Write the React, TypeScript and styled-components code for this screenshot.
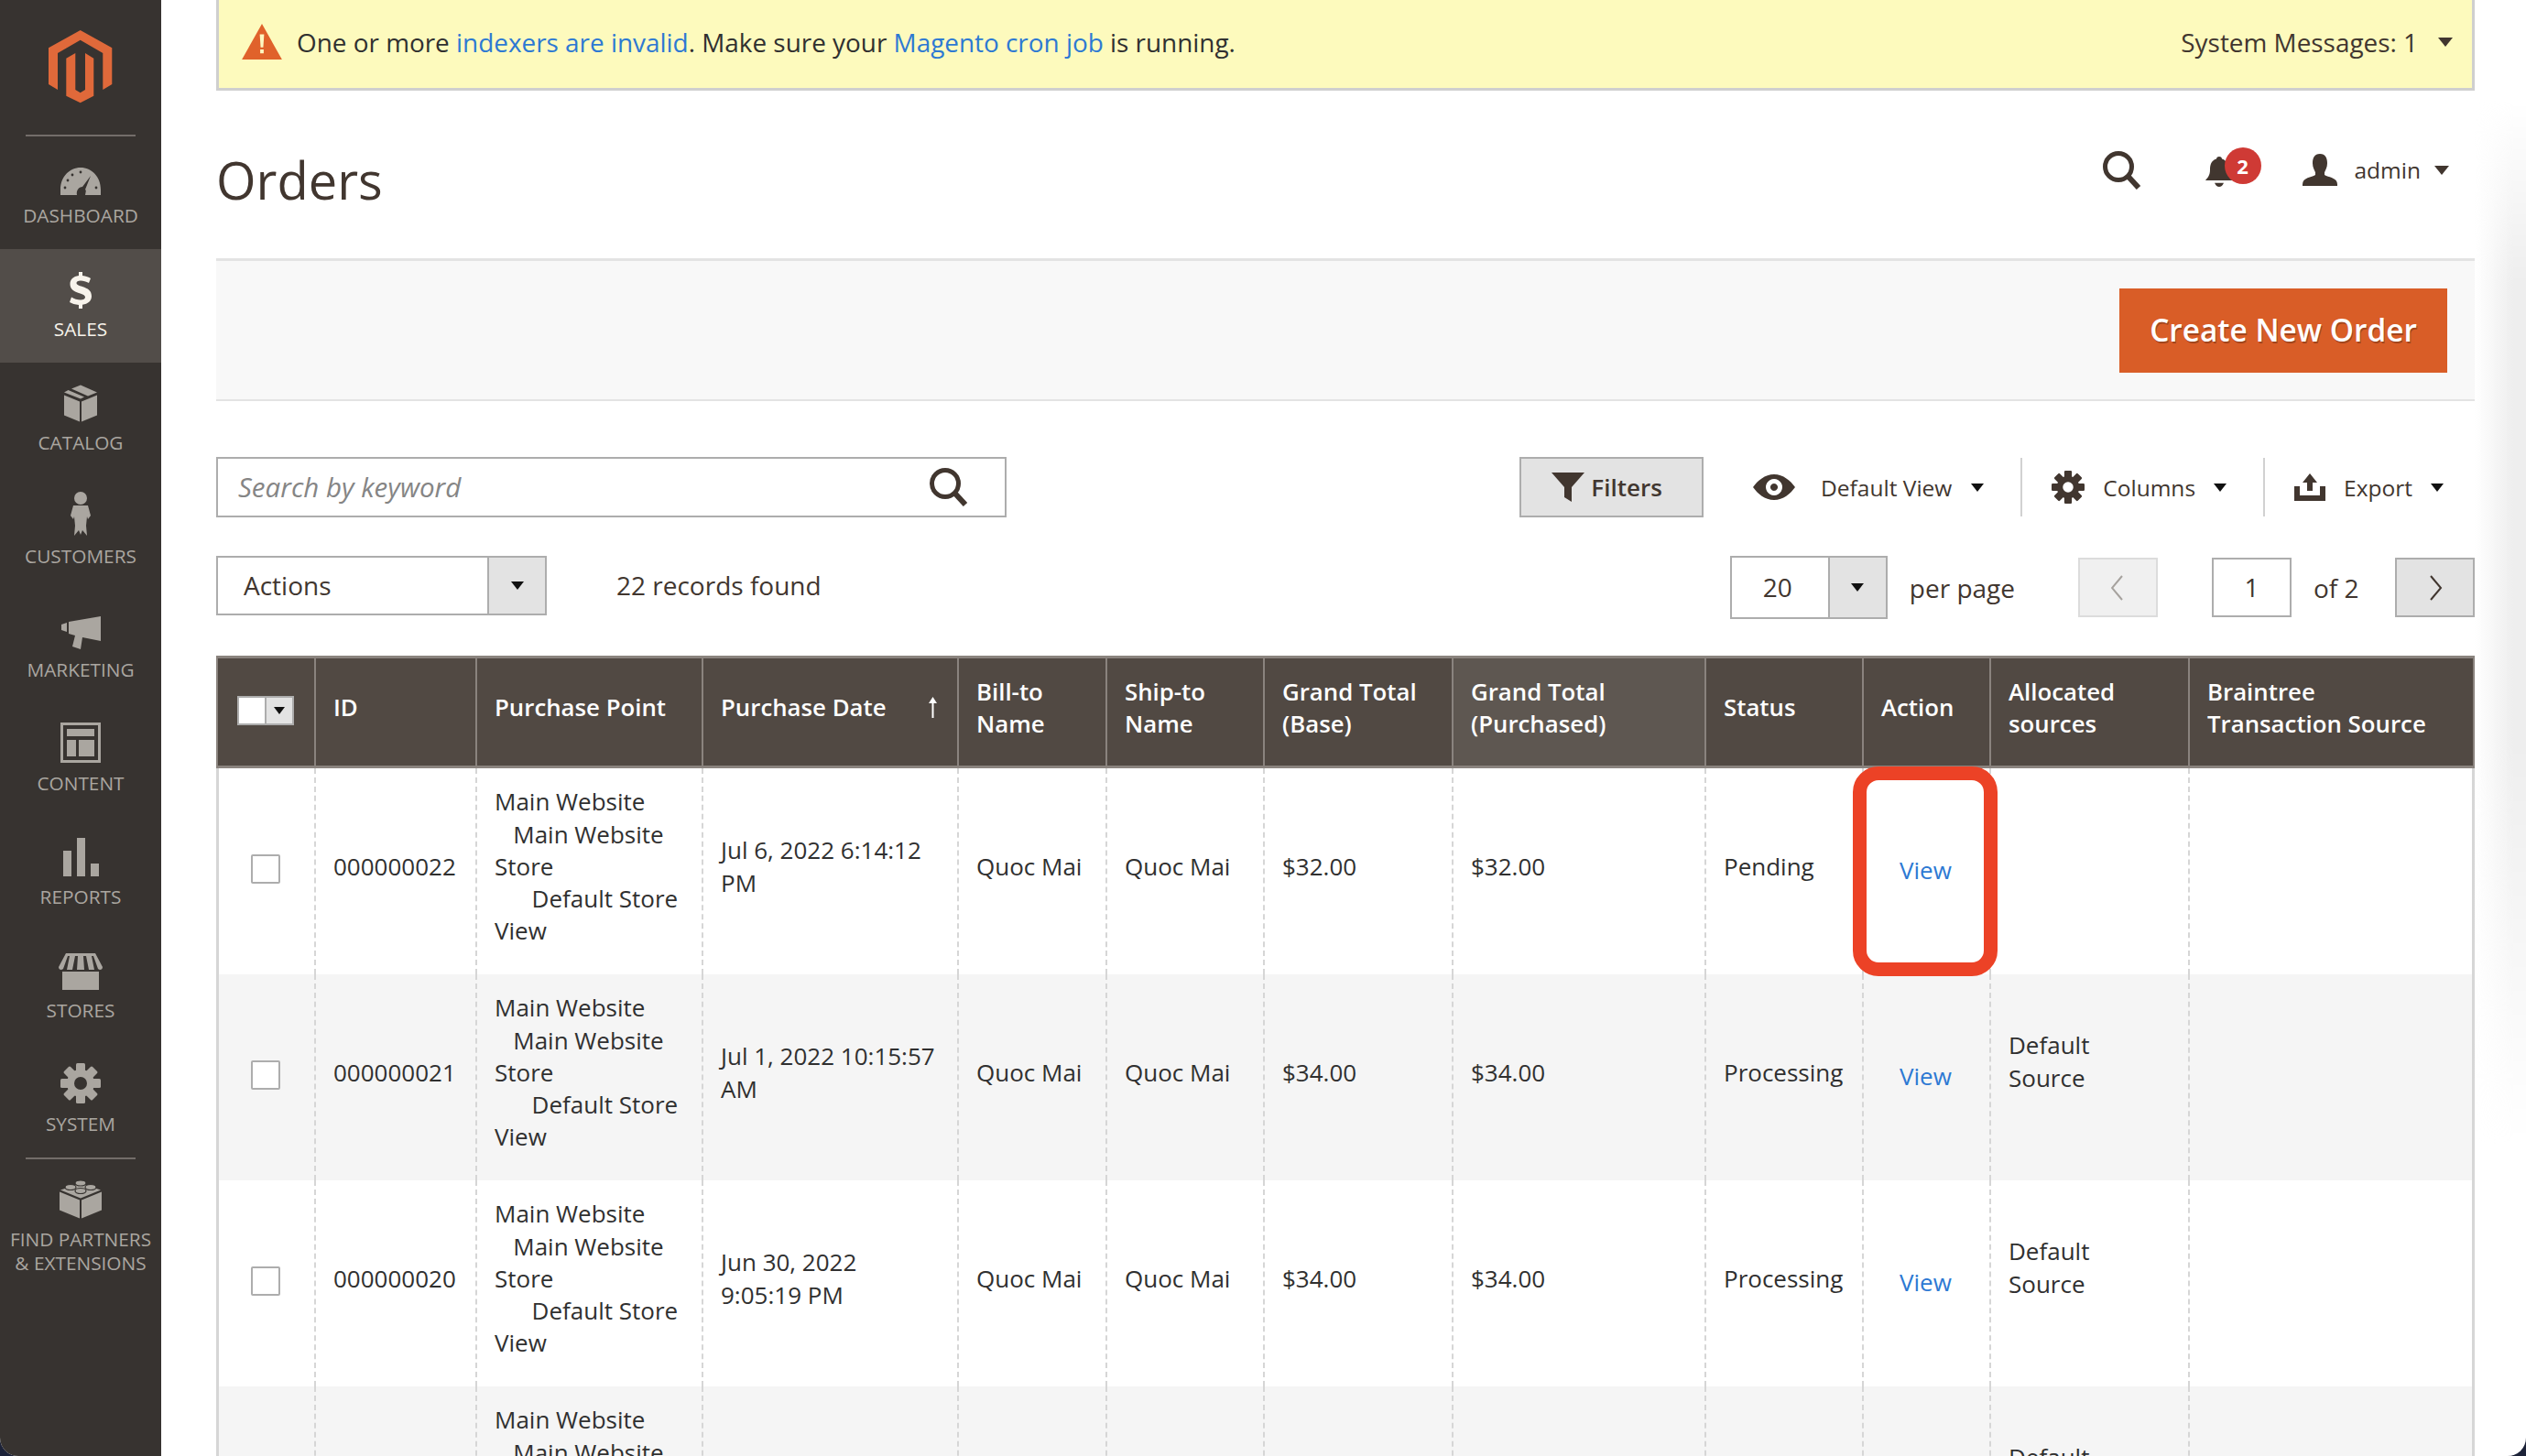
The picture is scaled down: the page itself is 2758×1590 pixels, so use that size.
import React from "react";
import styled, { createGlobalStyle } from "styled-components";

const GlobalStyle = createGlobalStyle`
  html, body {
    margin: 0;
    padding: 0;
    background: #1c2238;
  }
  body {
    font-family: "Open Sans", "Liberation Sans", sans-serif;
    color: #303030;
  }
  * {
    box-sizing: border-box;
  }
`;

type Row = {
  id: string;
  date: string;
  total: string;
  status: string;
  source?: string;
};

const rows: Row[] = [
  { id: "000000022", date: "Jul 6, 2022 6:14:12 PM", total: "$32.00", status: "Pending" },
  { id: "000000021", date: "Jul 1, 2022 10:15:57 AM", total: "$34.00", status: "Processing", source: "Default Source" },
  { id: "000000020", date: "Jun 30, 2022 9:05:19 PM", total: "$34.00", status: "Processing", source: "Default Source" },
  { id: "000000019", date: "Jun 30, 2022 9:01:44 PM", total: "$34.00", status: "Processing", source: "Default Source" },
];

const columnWidths = [107, 176, 247, 279, 162, 172, 206, 276, 172, 139, 217, 313];

const navItems = [
  { label: "Dashboard", icon: <GaugeIcon /> },
  { label: "Sales", icon: <DollarIcon />, active: true },
  { label: "Catalog", icon: <BoxIcon /> },
  { label: "Customers", icon: <PersonIcon /> },
  { label: "Marketing", icon: <MegaphoneIcon /> },
  { label: "Content", icon: <ContentIcon /> },
  { label: "Reports", icon: <BarsIcon /> },
  { label: "Stores", icon: <StoreIcon /> },
  { label: "System", icon: <GearIcon /> },
];

function Logo() {
  return (
    <svg width="70" height="80" viewBox="0 0 70 80" fill="#e0693a">
      <path d="M34.7 0 69.3 19.3V59L59.3 65V25L34.7 10.7 10 25V65L0 59V19.3Z" />
      <path d="M19.3 30.7 29.3 25V65L34.7 68.3 40 65V25L49.3 30.7V71.7L34.7 79.3 19.3 71.7Z" />
    </svg>
  );
}

function GaugeIcon() {
  return (
    <svg width="44" height="30" viewBox="0 0 44 30" fill="#aaa6a0">
      <path d="M0 30V24C0 10 10 0 22 0S44 10 44 24V30H27C28 25 28 25 27 24L33 9 24 21C20 21 17 25 18 30Z" />
      <g fill="#373330">
        <circle cx="8" cy="14" r="1.4" />
        <circle cx="13" cy="8" r="1.4" />
        <circle cx="22" cy="5" r="1.4" />
        <circle cx="5" cy="22" r="1.4" />
        <circle cx="39" cy="22" r="1.4" />
      </g>
    </svg>
  );
}

function DollarIcon() {
  return (
    <svg width="24" height="40" viewBox="0 0 24 40" fill="#f7f3eb">
      <path d="M10 0H14V4C18 4.5 21 5.5 23 7L21 12C18 10.5 15 9.5 12 9.5 9 9.5 7.5 10.5 7.5 12 7.5 14 10 14.8 14 16 20 18 24 20.5 24 26.5 24 31.5 20 35 14 35.8V40H10V36C6 35.7 2.5 34.5 0 33L2 27.5C5 29.2 8.5 30.5 12 30.5 15 30.5 17 29.5 17 27.5 17 25.5 14.5 24.5 10 23 4.5 21.2 0.5 18.8 0.5 13 0.5 8.2 4 4.8 10 4Z" />
    </svg>
  );
}

function BoxIcon() {
  return (
    <svg width="36" height="41" viewBox="0 0 36 40" fill="#aaa6a0">
      <path d="M18 0 36 8 26 12 8 4Z" />
      <path d="M4.5 5.5 22 13 18 15 0 8Z" />
      <path d="M0 11 17 18V40L0 33Z" />
      <path d="M36 11V33L19 40V18Z" />
    </svg>
  );
}

function PersonIcon() {
  return (
    <svg width="22" height="48" viewBox="0 0 22 48" fill="#aaa6a0">
      <circle cx="11" cy="7" r="7" />
      <path d="M3 15H19L22 26 19 30 18 27 17 37 18 48 13 42 11 47 9 42 4 48 5 37 4 27 3 30 0 26Z" />
    </svg>
  );
}

function MegaphoneIcon() {
  return (
    <svg width="43" height="36" viewBox="0 0 43 36" fill="#aaa6a0">
      <path d="M0 9 6 7V17L0 15Z" />
      <path d="M8 6 43 0V27L23 23 21 36 12 33 15 21 8 19Z" />
    </svg>
  );
}

function ContentIcon() {
  return (
    <svg width="44" height="44" viewBox="0 0 44 44" fill="#aaa6a0">
      <path fillRule="evenodd" d="M0 0H44V44H0ZM3 3V41H41V3Z" />
      <rect x="7" y="7" width="30" height="8" />
      <rect x="7" y="19" width="10" height="18" />
      <rect x="20" y="19" width="17" height="18" />
    </svg>
  );
}

function BarsIcon() {
  return (
    <svg width="39" height="42" viewBox="0 0 39 42" fill="#aaa6a0">
      <rect x="0" y="14" width="9" height="28" />
      <rect x="15" y="0" width="9" height="42" />
      <rect x="30" y="28" width="9" height="14" />
    </svg>
  );
}

function StoreIcon() {
  return (
    <svg width="48" height="40" viewBox="0 0 48 40" fill="#aaa6a0">
      <path d="M8 0H40L48 15C48 18 45 19 43 17L38 3H36L39 18H33L30 3H27L28 18H20L21 3H18L15 18H9L12 3H10L5 17C3 19 0 18 0 15Z" />
      <path d="M4 20H44V40H4Z" />
    </svg>
  );
}

function GearPaths({ hole }: { hole: string }) {
  const teeth = [0, 45, 90, 135, 180, 225, 270, 315];
  return (
    <>
      {teeth.map((a) => (
        <rect key={a} x="17" y="0" width="10" height="12" rx="1.5" transform={`rotate(${a} 22 22)`} />
      ))}
      <circle cx="22" cy="22" r="15" />
      <circle cx="22" cy="22" r="7" fill={hole} />
    </>
  );
}

function GearIcon() {
  return (
    <svg width="44" height="44" viewBox="0 0 44 44" fill="#aaa6a0">
      <GearPaths hole="#373330" />
    </svg>
  );
}

function BlockIcon() {
  return (
    <svg width="46" height="43" viewBox="0 0 46 42" fill="#aaa6a0">
      <path d="M0 13 22 22V42L0 33Z" />
      <path d="M46 13 24 22V42L46 33Z" />
      <path d="M23 4 45 11 23 20 1 11Z" />
      <g stroke="#373330" strokeWidth="1.2">
        <ellipse cx="23" cy="3.5" rx="6" ry="3" />
        <ellipse cx="12" cy="8" rx="6" ry="3" />
        <ellipse cx="34" cy="8" rx="6" ry="3" />
        <ellipse cx="23" cy="12" rx="6" ry="3" />
      </g>
    </svg>
  );
}

function SearchIcon({ size }: { size: number }) {
  return (
    <svg width={size} height={size} viewBox="0 0 42 42" fill="none" stroke="#41362f">
      <circle cx="17" cy="17" r="14.5" strokeWidth="5" />
      <path d="M27 27 39 40" strokeWidth="6" />
    </svg>
  );
}

function BellIcon() {
  return (
    <svg width="30" height="33" viewBox="0 0 30 38" preserveAspectRatio="none" fill="#41362f">
      <path d="M15 0C17 0 18 1.5 18 3 24 5 25 11 25 17 25 24 28 27 30 30H0C2 27 5 24 5 17 5 11 6 5 12 3 12 1.5 13 0 15 0Z" />
      <path d="M10 33H20C19 36 17 38 15 38S11 36 10 33Z" />
    </svg>
  );
}

function UserIcon() {
  return (
    <svg width="38" height="35" viewBox="0 0 38 38" preserveAspectRatio="none" fill="#41362f">
      <path d="M19 0C25 0 27 5 27 11 27 16 25 19 24 22V25C28 28 38 28 38 36V38H0V36C0 28 10 28 14 25V22C13 19 11 16 11 11 11 5 13 0 19 0Z" />
    </svg>
  );
}

function WarningIcon() {
  return (
    <svg width="44" height="39" viewBox="0 0 46 41">
      <path fill="#e0622b" d="M23 0 46 41H0Z" />
      <path fill="#fdf8c2" d="M20.5 12H25.5L24.5 27H21.5ZM21 29.5H25V34H21Z" />
    </svg>
  );
}

function FunnelIcon() {
  return (
    <svg width="36" height="32" viewBox="0 0 36 32" fill="#41362f">
      <path d="M0 0H36L22 16V32L14 27V16Z" />
    </svg>
  );
}

function EyeIcon() {
  return (
    <svg width="46" height="28" viewBox="0 0 46 28" fill="#41362f">
      <path
        fillRule="evenodd"
        d="M23 0C33 0 41 7 46 14 41 21 33 28 23 28S5 21 0 14C5 7 13 0 23 0ZM23 5A9 9 0 1 0 23.01 5ZM23 10A4 4 0 1 1 22.99 10Z"
      />
    </svg>
  );
}

function ExportIcon() {
  return (
    <svg width="34" height="30" viewBox="0 0 34 30" fill="#41362f">
      <path d="M17 0 25 10H20V19H14V10H9Z" />
      <path d="M0 14H6V24H28V14H34V30H0Z" />
    </svg>
  );
}

function ColumnsGear() {
  return (
    <svg width="36" height="36" viewBox="0 0 44 44" fill="#41362f">
      <GearPaths hole="#fff" />
    </svg>
  );
}

function ChevronIcon({ left, color }: { left?: boolean; color: string }) {
  return (
    <svg width="16" height="28" viewBox="0 0 16 28" fill="none" stroke={color} strokeWidth="2">
      <path d={left ? "M12 1 1 14 12 27" : "M3 1 14 14 3 27"} />
    </svg>
  );
}

function SortUpIcon() {
  return (
    <svg width="11" height="23" viewBox="0 0 11 23" fill="#fff">
      <path d="M5.5 0 10 7H6.5V23H4.5V7H1Z" />
    </svg>
  );
}

export default function App() {
  return (
    <Page>
      <GlobalStyle />
      <Sidebar>
        <LogoBox>
          <Logo />
        </LogoBox>
        {navItems.map((item) => (
          <NavItem key={item.label} $active={item.active}>
            <NavIcon>{item.icon}</NavIcon>
            <NavLabel>{item.label}</NavLabel>
          </NavItem>
        ))}
        <NavDivider />
        <PartnersItem>
          <NavIcon>
            <BlockIcon />
          </NavIcon>
          <NavLabel>
            Find Partners
            <br />& Extensions
          </NavLabel>
        </PartnersItem>
      </Sidebar>

      <Main>
        <Banner>
          <BannerMessage>
            <WarningIcon />
            <span>
              One or more <BlueLink>indexers are invalid</BlueLink>. Make sure your{" "}
              <BlueLink>Magento cron job</BlueLink> is running.
            </span>
          </BannerMessage>
          <BannerRight>
            System Messages: 1 <Caret $size={8} $gap={22} />
          </BannerRight>
        </Banner>

        <TitleRow>
          <Title>Orders</Title>
          <HeaderActions>
            <SearchIcon size={42} />
            <BellWrap>
              <BellIcon />
              <Badge>2</Badge>
            </BellWrap>
            <AdminBox>
              <UserIcon />
              <AdminName>admin</AdminName>
              <Caret $size={8} $gap={15} />
            </AdminBox>
          </HeaderActions>
        </TitleRow>

        <ActionBar>
          <PrimaryButton>Create New Order</PrimaryButton>
        </ActionBar>

        <ToolRow>
          <SearchBox>
            <SearchPlaceholder>Search by keyword</SearchPlaceholder>
            <SearchIcon size={42} />
          </SearchBox>
          <ToolRight>
            <FilterButton>
              <FunnelIcon />
              Filters
            </FilterButton>
            <ToolItem $left={54}>
              <EyeIcon />
              <ToolText $gap={28}>Default View</ToolText>
              <Caret $size={7} $gap={21} $dark />
            </ToolItem>
            <ToolDivider />
            <ToolItem $left={32}>
              <ColumnsGear />
              <ToolText $gap={20}>Columns</ToolText>
              <Caret $size={7} $gap={20} $dark />
            </ToolItem>
            <ToolDivider />
            <ToolItem $left={32} $last>
              <ExportIcon />
              <ToolText $gap={20}>Export</ToolText>
              <Caret $size={7} $gap={20} $dark />
            </ToolItem>
          </ToolRight>
        </ToolRow>

        <PagerRow>
          <ActionsSelect>
            <SelectValue>Actions</SelectValue>
            <SelectArrow>
              <Caret $size={7} $dark />
            </SelectArrow>
          </ActionsSelect>
          <Records>22 records found</Records>
          <PagerRight>
            <PerPageSelect>
              <PerPageValue>20</PerPageValue>
              <SelectArrow>
                <Caret $size={7} $dark />
              </SelectArrow>
            </PerPageSelect>
            <PerPageText>per page</PerPageText>
            <PageButton $disabled>
              <ChevronIcon left color="#a6a29e" />
            </PageButton>
            <PageInput>1</PageInput>
            <OfText>of 2</OfText>
            <PageButton>
              <ChevronIcon color="#41362f" />
            </PageButton>
          </PagerRight>
        </PagerRow>

        <Table>
          <colgroup>
            {columnWidths.map((w, i) => (
              <col key={i} width={w} />
            ))}
          </colgroup>
          <thead>
            <tr>
              <HeadCell $center>
                <MassSelect>
                  <MassBox />
                  <MassArrow>
                    <Caret $size={6} $dark />
                  </MassArrow>
                </MassSelect>
              </HeadCell>
              <HeadCell>ID</HeadCell>
              <HeadCell>Purchase Point</HeadCell>
              <HeadCell>
                <SortHead>
                  Purchase Date <SortUpIcon />
                </SortHead>
              </HeadCell>
              <HeadCell>Bill-to Name</HeadCell>
              <HeadCell>Ship-to Name</HeadCell>
              <HeadCell>
                Grand Total
                <br />
                (Base)
              </HeadCell>
              <HeadCell $sorted>
                Grand Total
                <br />
                (Purchased)
              </HeadCell>
              <HeadCell>Status</HeadCell>
              <HeadCell>Action</HeadCell>
              <HeadCell>
                Allocated
                <br />
                sources
              </HeadCell>
              <HeadCell>
                Braintree
                <br />
                Transaction Source
              </HeadCell>
            </tr>
          </thead>
          <tbody>
            {rows.map((row, i) => (
              <BodyRow key={row.id} $odd={i % 2 === 1}>
                <BodyCell $center>
                  <Check />
                </BodyCell>
                <BodyCell>{row.id}</BodyCell>
                <BodyCell>
                  Main Website
                  <br />
                  {"\u00A0\u00A0\u00A0"}Main Website Store
                  <br />
                  {"\u00A0\u00A0\u00A0\u00A0\u00A0\u00A0"}Default Store View
                </BodyCell>
                <BodyCell>{row.date}</BodyCell>
                <BodyCell>Quoc Mai</BodyCell>
                <BodyCell>Quoc Mai</BodyCell>
                <BodyCell>{row.total}</BodyCell>
                <BodyCell>{row.total}</BodyCell>
                <BodyCell>{row.status}</BodyCell>
                <ActionCell>
                  <ViewLink>View</ViewLink>
                  {i === 0 && <Marker />}
                </ActionCell>
                <BodyCell>
                  <SourceText>{row.source}</SourceText>
                </BodyCell>
                <BodyCell />
              </BodyRow>
            ))}
          </tbody>
        </Table>
      </Main>
      <EdgeShade />
    </Page>
  );
}

const Page = styled.div`
  position: relative;
  display: flex;
  width: 2758px;
  height: 1590px;
  overflow: hidden;
  background: #fff;
  border-radius: 0 0 20px 20px;
`;

const Sidebar = styled.nav`
  flex: 0 0 176px;
  background: #373330;
`;

const LogoBox = styled.div`
  display: flex;
  justify-content: center;
  height: 149px;
  padding-top: 33px;
  margin: 0 28px -1px;
  border-bottom: 2px solid #736d69;
`;

const NavItem = styled.div<{ $active?: boolean }>`
  display: flex;
  flex-direction: column;
  align-items: center;
  justify-content: flex-end;
  height: 124px;
  padding-bottom: 24px;
  background: ${(p) => (p.$active ? "#524d49" : "transparent")};
  color: ${(p) => (p.$active ? "#f7f3eb" : "#aaa6a0")};
`;

const PartnersItem = styled(NavItem)`
  height: auto;
  padding: 15px 0 0;
  justify-content: flex-start;
`;

const NavIcon = styled.div`
  display: flex;
  align-items: flex-end;
  justify-content: center;
  height: 50px;
`;

const NavLabel = styled.div`
  margin-top: 9px;
  font-size: 20.8px;
  line-height: 26px;
  text-align: center;
  text-transform: uppercase;
  white-space: nowrap;
`;

const NavDivider = styled.div`
  height: 2px;
  margin: 0 28px;
  background: #736d69;
`;

const Main = styled.main`
  flex: 0 0 2466px;
  min-width: 0;
  margin-left: 60px;
`;

const Banner = styled.div`
  display: flex;
  align-items: center;
  justify-content: space-between;
  height: 99px;
  padding: 0 21px 5px 25px;
  background: #fdfabd;
  border: 3px solid #cfcfcf;
  border-top: 0;
  font-size: 27.9px;
`;

const BannerMessage = styled.div`
  display: flex;
  align-items: center;
  gap: 16px;
  color: #303030;
`;

const BlueLink = styled.a`
  color: #2d79d3;
`;

const BannerRight = styled.div`
  display: flex;
  align-items: center;
  color: #41362f;
`;

const Caret = styled.span<{ $size: number; $gap?: number; $dark?: boolean }>`
  display: inline-block;
  width: 0;
  height: 0;
  margin-left: ${(p) => p.$gap ?? 0}px;
  border-left: ${(p) => p.$size}px solid transparent;
  border-right: ${(p) => p.$size}px solid transparent;
  border-top: ${(p) => p.$size + 2}px solid ${(p) => (p.$dark ? "#111" : "#41362f")};
`;

const TitleRow = styled.div`
  display: flex;
  align-items: center;
  justify-content: space-between;
  height: 186px;
  border-bottom: 3px solid #e3e3e3;
`;

const Title = styled.h1`
  margin: 11px 0 0;
  font-size: 56px;
  font-weight: 400;
  line-height: 72px;
  color: #41362f;
`;

const HeaderActions = styled.div`
  display: flex;
  align-items: center;
  margin: 0 28px 10px 0;
`;

const BellWrap = styled.div`
  position: relative;
  display: flex;
  margin: 4px 0 0 70px;
`;

const Badge = styled.span`
  position: absolute;
  top: -10px;
  left: 21px;
  width: 40px;
  height: 40px;
  border-radius: 50%;
  background: #cf3a35;
  color: #fff;
  font-size: 22px;
  font-weight: 700;
  line-height: 40px;
  text-align: center;
`;

const AdminBox = styled.div`
  display: flex;
  align-items: center;
  margin-left: 76px;
`;

const AdminName = styled.span`
  margin-left: 19px;
  font-size: 24.5px;
  color: #41362f;
`;

const ActionBar = styled.div`
  display: flex;
  align-items: center;
  justify-content: flex-end;
  height: 153px;
  padding: 0 30px 0 0;
  background: #f8f8f8;
  border-bottom: 2px solid #e3e3e3;
`;

const PrimaryButton = styled.button`
  width: 358px;
  height: 92px;
  padding: 0 0 2px;
  border: 0;
  background: #d95d27;
  color: #fff;
  font-family: inherit;
  font-size: 33.4px;
  font-weight: 600;
  text-shadow: 1px 2px 0 rgba(0, 0, 0, 0.25);
`;

const ToolRow = styled.div`
  display: flex;
  align-items: center;
  justify-content: space-between;
  margin-top: 61px;
  height: 66px;
`;

const SearchBox = styled.div`
  display: flex;
  align-items: center;
  justify-content: space-between;
  width: 863px;
  height: 66px;
  padding: 0 40px 0 22px;
  border: 2px solid #adadad;
`;

const SearchPlaceholder = styled.span`
  margin-bottom: 2px;
  font-size: 29.5px;
  font-style: italic;
  color: #858585;
`;

const ToolRight = styled.div`
  display: flex;
  align-items: center;
`;

const FilterButton = styled.div`
  display: flex;
  align-items: center;
  justify-content: center;
  gap: 7px;
  width: 201px;
  height: 66px;
  padding-right: 10px;
  background: #e3e3e3;
  border: 2px solid #adadad;
  font-size: 26px;
  font-weight: 600;
  color: #41362f;
`;

const ToolItem = styled.div<{ $left: number; $last?: boolean }>`
  display: flex;
  align-items: center;
  padding: 0 ${(p) => (p.$last ? 34 : 40)}px 0 ${(p) => p.$left}px;
`;

const ToolText = styled.span<{ $gap: number }>`
  margin-left: ${(p) => p.$gap}px;
  font-size: 24.5px;
  color: #41362f;
`;

const ToolDivider = styled.div`
  width: 2px;
  height: 64px;
  background: #d1d1d1;
`;

const PagerRow = styled.div`
  display: flex;
  align-items: center;
  margin-top: 42px;
  height: 65px;
`;

const ActionsSelect = styled.div`
  display: flex;
  width: 361px;
  height: 65px;
  border: 2px solid #adadad;
`;

const SelectValue = styled.div`
  flex: 1;
  padding-left: 28px;
  font-size: 28px;
  line-height: 61px;
  color: #41362f;
`;

const SelectArrow = styled.div`
  display: flex;
  align-items: center;
  justify-content: center;
  width: 63px;
  background: #e3e3e3;
  border-left: 2px solid #adadad;
`;

const Records = styled.div`
  margin: 0 0 1px 76px;
  font-size: 28px;
  color: #41362f;
`;

const PagerRight = styled.div`
  display: flex;
  align-self: flex-start;
  align-items: center;
  margin-left: auto;
`;

const PerPageSelect = styled.div`
  display: flex;
  width: 172px;
  height: 69px;
  border: 2px solid #adadad;
`;

const PerPageValue = styled.div`
  flex: 1;
  padding-right: 5px;
  font-size: 28px;
  line-height: 65px;
  text-align: center;
  color: #41362f;
`;

const PerPageText = styled.div`
  margin: 0 69px 0 24px;
  font-size: 28px;
  color: #41362f;
`;

const PageButton = styled.div<{ $disabled?: boolean }>`
  display: flex;
  align-items: center;
  justify-content: center;
  width: 87px;
  height: 65px;
  background: ${(p) => (p.$disabled ? "#f0f0f0" : "#e3e3e3")};
  border: 2px solid ${(p) => (p.$disabled ? "#dcdcdc" : "#adadad")};
`;

const PageInput = styled.div`
  width: 87px;
  height: 65px;
  margin-left: 59px;
  border: 2px solid #adadad;
  font-size: 28px;
  line-height: 61px;
  text-align: center;
  color: #41362f;
`;

const OfText = styled.div`
  margin: 0 auto 0 24px;
  width: 89px;
  font-size: 28px;
  color: #41362f;
`;

const Table = styled.table`
  width: 2466px;
  margin-top: 44px;
  border-collapse: separate;
  border-spacing: 0;
  table-layout: fixed;
`;

const HeadCell = styled.th<{ $center?: boolean; $sorted?: boolean }>`
  height: 123px;
  padding: 0 21px 10px 19px;
  background: ${(p) => (p.$sorted ? "#5e5751" : "#514943")};
  border-top: 3px solid #8a837e;
  border-bottom: 3px solid #8a837e;
  border-left: 2px solid #8a837e;
  color: #fff;
  font-size: 25.8px;
  font-weight: 600;
  line-height: 35px;
  text-align: ${(p) => (p.$center ? "center" : "left")};
  vertical-align: middle;
  &:last-child {
    border-right: 2px solid #8a837e;
  }
`;

const SortHead = styled.div`
  display: flex;
  align-items: center;
  justify-content: space-between;
`;

const MassSelect = styled.div`
  display: inline-flex;
  width: 62px;
  height: 32px;
  margin-top: 6px;
  border: 2px solid #adadad;
  vertical-align: middle;
`;

const MassBox = styled.div`
  flex: 1;
  background: #fff;
`;

const MassArrow = styled.div`
  display: flex;
  align-items: center;
  justify-content: center;
  width: 30px;
  background: #e3e3e3;
  border-left: 2px solid #adadad;
`;

const BodyRow = styled.tr<{ $odd: boolean }>`
  background: ${(p) => (p.$odd ? "#f5f5f5" : "#fff")};
`;

const BodyCell = styled.td<{ $center?: boolean }>`
  height: 225px;
  padding: 0 21px 10px 19px;
  border-left: 2px dashed #d6d6d6;
  font-size: 26px;
  line-height: 35.2px;
  color: #303030;
  text-align: ${(p) => (p.$center ? "center" : "left")};
  vertical-align: middle;
  &:first-child {
    border-left: 3px solid #d6d6d6;
  }
  &:last-child {
    border-right: 3px solid #d6d6d6;
  }
`;

const ActionCell = styled(BodyCell)`
  position: relative;
`;

const ViewLink = styled.a`
  display: block;
  margin: 9px 0 0 20px;
  color: #2d79d3;
`;

const SourceText = styled.div`
  margin-bottom: 24px;
`;

const Check = styled.div`
  display: inline-block;
  width: 32px;
  height: 32px;
  background: #fff;
  border: 2px solid #adadad;
  border-radius: 2px;
  vertical-align: middle;
`;

const Marker = styled.div`
  position: absolute;
  top: -2px;
  left: -12px;
  width: 158px;
  height: 229px;
  border: 15px solid #ec4226;
  border-radius: 28px;
`;

const EdgeShade = styled.div`
  position: absolute;
  top: 110px;
  right: 0;
  width: 56px;
  height: 1140px;
  background: linear-gradient(90deg, rgba(238, 238, 238, 0), #eeeeee 75%);
  -webkit-mask-image: linear-gradient(180deg, transparent, #000 200px, #000 700px, transparent);
  mask-image: linear-gradient(180deg, transparent, #000 200px, #000 700px, transparent);
`;
